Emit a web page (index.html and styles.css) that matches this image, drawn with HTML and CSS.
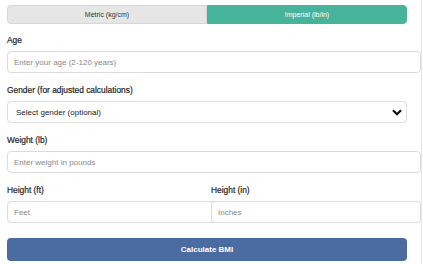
FILE: index.html
```html
<!DOCTYPE html>
<html lang="en">
<head>
<meta charset="UTF-8">
<meta name="viewport" content="width=device-width, initial-scale=1.0">
<title>BMI Calculator</title>
<link rel="stylesheet" href="styles.css">
</head>
<body>
<div class="container">
  <div class="unit-toggle">
    <button class="unit-btn">Metric (kg/cm)</button>
    <button class="unit-btn active">Imperial (lb/in)</button>
  </div>

  <div class="form-group">
    <label for="age">Age</label>
    <input type="number" id="age" placeholder="Enter your age (2-120 years)">
  </div>

  <div class="form-group">
    <label for="gender">Gender (for adjusted calculations)</label>
    <select id="gender">
      <option value="">Select gender (optional)</option>
      <option value="male">Male</option>
      <option value="female">Female</option>
    </select>
  </div>

  <div class="form-group">
    <label for="weight">Weight (lb)</label>
    <input type="number" id="weight" placeholder="Enter weight in pounds">
  </div>

  <div class="form-row">
    <div class="form-group">
      <label for="feet">Height (ft)</label>
      <input type="number" id="feet" placeholder="Feet">
    </div>
    <div class="form-group">
      <label for="inches">Height (in)</label>
      <input type="number" id="inches" placeholder="Inches">
    </div>
  </div>

  <button class="calc-btn">Calculate BMI</button>
</div>
</body>
</html>
```

FILE: styles.css
```css
body {
  font-family: "Liberation Sans", Arial, sans-serif;
  background-color: #fff;
  margin: 0;
  padding: 5px 0 0 7px;
  border-right: 1px solid #e6e6e6;
  width: 414px;
  min-height: 259px;
  overflow: hidden;
}
.container {
  width: 400px;
}
.unit-toggle {
  display: flex;
  margin-bottom: 11px;
}
.unit-btn {
  flex: 1;
  height: 19px;
  font-family: inherit;
  font-size: 7px;
  color: #333;
  background-color: #e6e6e6;
  border: 1px solid #d6d6d6;
  border-radius: 4px 0 0 4px;
  padding: 0;
  cursor: pointer;
}
.unit-btn.active {
  background-color: #48b39b;
  border-color: #48b39b;
  color: #fff;
  border-radius: 0 4px 4px 0;
}
.form-group {
  margin-bottom: 12px;
}
label {
  display: block;
  font-size: 8.4px;
  color: #1e1e1e;
  -webkit-text-stroke: 0.2px #1e1e1e;
  line-height: 11px;
  margin-bottom: 5px;
}
input[type="number"] {
  display: block;
  width: 100%;
  height: 20px;
  padding: 0 6px;
  border: 1px solid #dcdcdc;
  border-radius: 4px;
  font-family: inherit;
  font-size: 8px;
  color: #333;
  background-color: #fff;
  -moz-appearance: textfield;
}
input::-webkit-outer-spin-button,
input::-webkit-inner-spin-button {
  -webkit-appearance: none;
  margin: 0;
}
input::placeholder {
  color: #888;
}
select {
  display: block;
  width: 100%;
  height: 22px;
  box-sizing: border-box;
  padding: 0 8px;
  border: 1px solid #dcdcdc;
  border-radius: 4px;
  font-family: inherit;
  font-size: 8px;
  color: #222;
  -webkit-appearance: none;
  appearance: none;
  background: #fff url("data:image/svg+xml,%3Csvg xmlns='http://www.w3.org/2000/svg' width='10' height='7' viewBox='0 0 10 7'%3E%3Cpath d='M1 1.2 5 5.2 9 1.2' fill='none' stroke='%23111' stroke-width='2.2'/%3E%3C/svg%3E") no-repeat right 4px center;
}
.form-row {
  display: grid;
  grid-template-columns: 1fr 1fr;
  column-gap: 8px;
  margin-bottom: 15px;
}
.form-row .form-group {
  margin-bottom: 0;
}
.calc-btn {
  display: block;
  width: 100%;
  height: 23px;
  border: none;
  border-radius: 4px;
  background-color: #4a6ca1;
  color: #fff;
  font-family: inherit;
  font-size: 8px;
  font-weight: bold;
  cursor: pointer;
}
```
